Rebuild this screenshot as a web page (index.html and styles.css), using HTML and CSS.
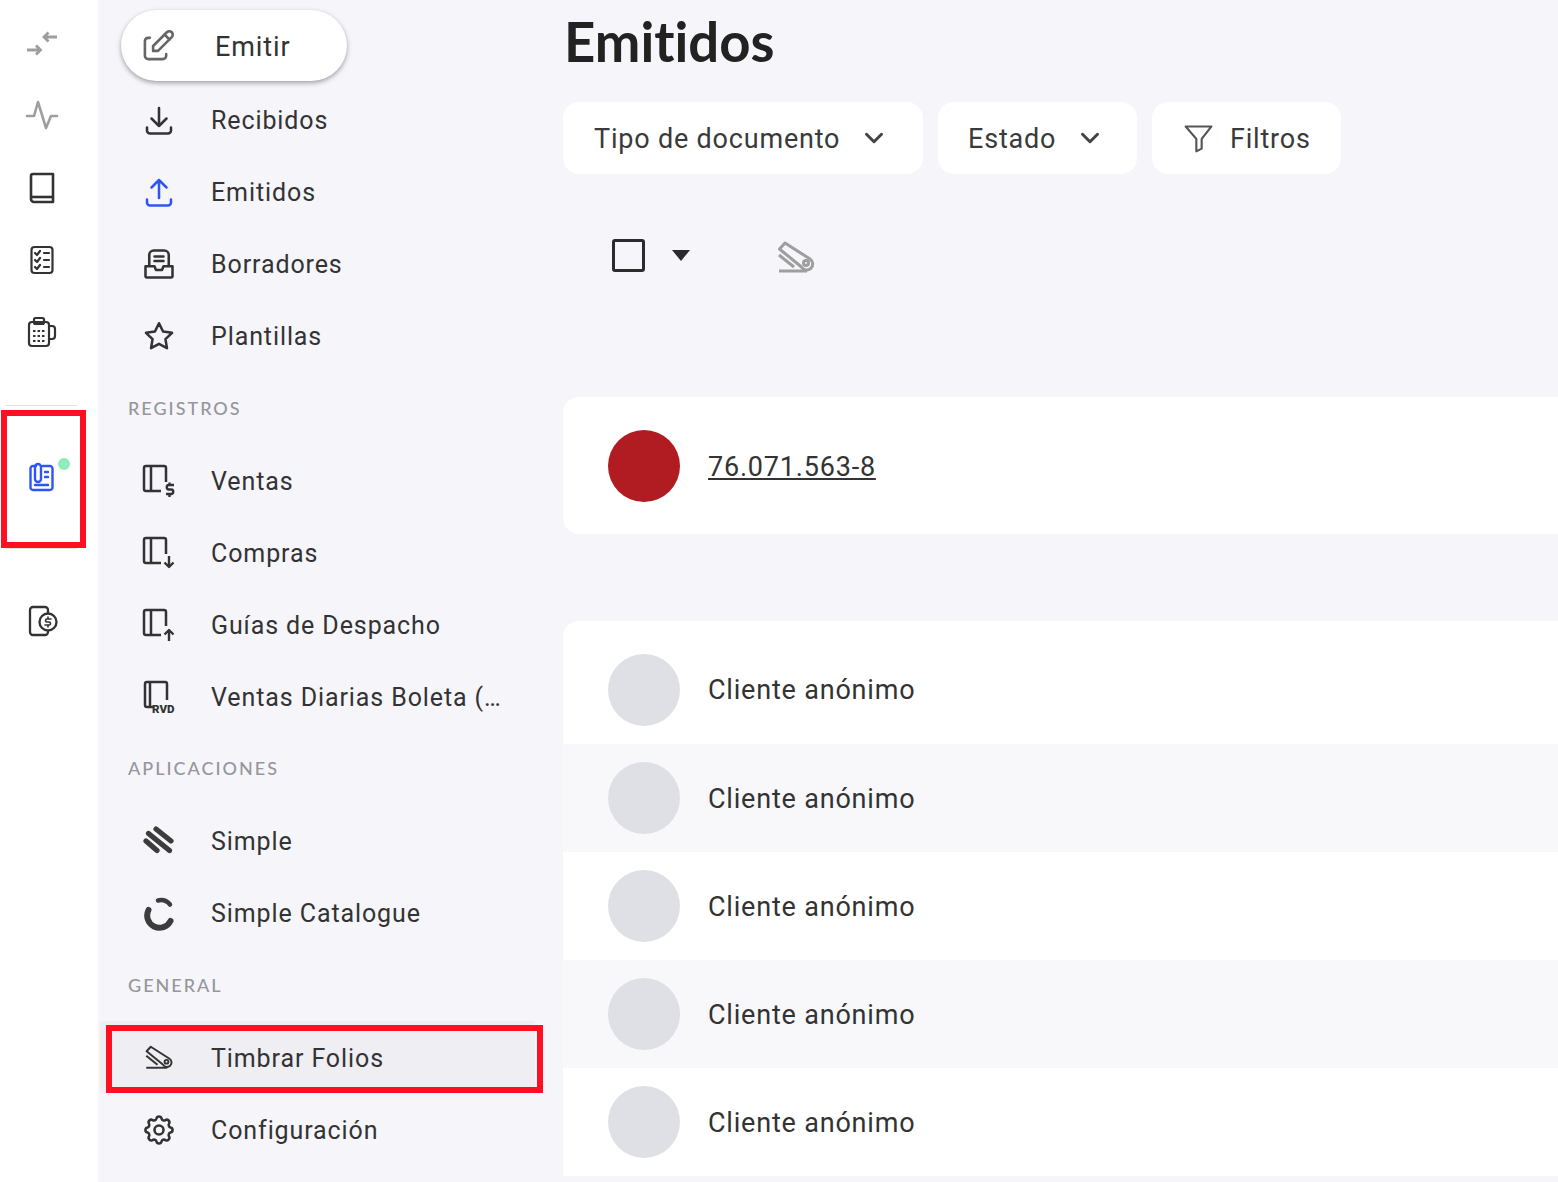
FILE: index.html
```html
<!DOCTYPE html>
<html lang="es">
<head>
<meta charset="utf-8">
<title>Emitidos</title>
<link rel="stylesheet" href="styles.css">
</head>
<body>
<div class="app">
  <nav class="rail">
    <div class="rail-top">
      <div class="rail-item"><svg class="ico" viewBox="0 0 36 36" fill="none" stroke="#9e9e9e" stroke-width="2.800"><path d="M3 25h13M12 20.500l4.500 4.500-4.500 4.500"/><path d="M33 12H20M24.500 7.500L20 12l4.500 4.500"/></svg></div>
      <div class="rail-item"><svg class="ico" viewBox="0 0 36 36" fill="none" stroke="#9e9e9e" stroke-width="2.600" stroke-linejoin="round" stroke-linecap="round"><path d="M3 19h7l4-14 8 26 5-12h6"/></svg></div>
      <div class="rail-item"><svg class="ico" viewBox="0 0 36 36" fill="none" stroke="#333" stroke-width="2.600" stroke-linejoin="round"><path d="M9 4h20v28H10a3 3 0 0 1-3-3V6a2 2 0 0 1 2-2z"/><path d="M7 27h22"/></svg></div>
      <div class="rail-item"><svg class="ico" viewBox="0 0 36 36" fill="none" stroke="#333" stroke-width="2.200" stroke-linecap="round" stroke-linejoin="round"><rect x="7.500" y="5" width="21" height="26" rx="3"/><path d="M11 11l2 2 3-4M11 18l2 2 3-4M11 25l2 2 3-4M20 11h5M20 18h5M20 25h5"/></svg></div>
      <div class="rail-item"><svg class="ico" viewBox="0 0 36 36" fill="none" stroke="#333" stroke-width="2.200" stroke-linejoin="round"><rect x="5" y="8" width="20" height="24" rx="3"/><rect x="10" y="4" width="10" height="6" rx="1.500"/><path d="M25 12h3a3 3 0 0 1 3 3v7a3 3 0 0 1-3 3h-3"/><path d="M9 17h12M9 22h12M9 27h12" stroke-dasharray="2.500 2"/></svg></div>
    </div>
    <div class="rail-group">
      <div class="rail-item"><svg class="ico" viewBox="0 0 36 36" fill="none" stroke="#2f55f5" stroke-width="2.400" stroke-linecap="round" stroke-linejoin="round"><path d="M12 7H9a2.500 2.500 0 0 0-2.500 2.500v19A2.500 2.500 0 0 0 9 31h17a2.500 2.500 0 0 0 2.500-2.500v-19A2.500 2.500 0 0 0 26 7h-7"/><path d="M11 20V8a3 3 0 0 1 6 0v12a3 3 0 0 1-6 0z"/><path d="M21 13h3M21 18h3M11 26h13"/></svg><span class="dot"></span></div>
      <span class="mark mark-rail"></span>
    </div>
    <div class="rail-item rail-last"><svg class="ico" viewBox="0 0 36 36" fill="none" stroke="#333" stroke-width="2.300" stroke-linecap="round" stroke-linejoin="round"><path d="M24 10V7a3 3 0 0 0-3-3H9a3 3 0 0 0-3 3v22a3 3 0 0 0 3 3h12a3 3 0 0 0 3-3"/><circle cx="24" cy="19" r="8.500"/><path d="M27 16h-4a1.500 1.500 0 0 0 0 3h2a1.500 1.500 0 0 1 0 3h-4M24 14v2M24 22v2" stroke-width="1.600"/></svg></div>
  </nav>

  <aside class="sidebar">
    <button class="emit"><svg class="ico" viewBox="1 1 22 22" fill="none" stroke="#666" stroke-width="1.600" stroke-linecap="round" stroke-linejoin="round"><path d="M7 7H6a2 2 0 0 0-2 2v9a2 2 0 0 0 2 2h9a2 2 0 0 0 2-2v-1"/><path d="M20.400 6.600a2.100 2.100 0 0 0-3-3L9 12v3h3l8.400-8.400z"/><path d="M16 5l3 3"/></svg><span class="emit-label">Emitir</span></button>
    <ul class="list">
      <li class="item"><svg class="ico" viewBox="0 0 24 24" fill="none" stroke="#333" stroke-width="1.700" stroke-linecap="round" stroke-linejoin="round"><path d="M4 17v2a2 2 0 0 0 2 2h12a2 2 0 0 0 2-2v-2M7 11l5 5 5-5M12 4v12"/></svg><span>Recibidos</span></li>
      <li class="item"><svg class="ico" viewBox="0 0 24 24" fill="none" stroke="#2f55f5" stroke-width="1.700" stroke-linecap="round" stroke-linejoin="round"><path d="M4 17v2a2 2 0 0 0 2 2h12a2 2 0 0 0 2-2v-2M7 9l5-5 5 5M12 4v12"/></svg><span>Emitidos</span></li>
      <li class="item"><svg class="ico" viewBox="0 0 24 24" fill="none" stroke="#333" stroke-width="1.700" stroke-linecap="round" stroke-linejoin="round"><path d="M5.500 13V6a3 3 0 0 1 3-3h7a3 3 0 0 1 3 3v7"/><path d="M9 7h6M9 10h6"/><path d="M3 13.500h6l1 2.500h4l1-2.500h6V20a1 1 0 0 1-1 1H4a1 1 0 0 1-1-1z"/></svg><span>Borradores</span></li>
      <li class="item"><svg class="ico" viewBox="0 0 24 24" fill="none" stroke="#333" stroke-width="1.700" stroke-linejoin="round"><path d="M12 3.500l2.700 5.500 6 .9-4.400 4.200 1 6L12 17.200 6.700 20.100l1-6L3.300 9.900l6-.9z"/></svg><span>Plantillas</span></li>
    </ul>
    <h2 class="section">REGISTROS</h2>
    <ul class="list">
      <li class="item"><svg class="ico" viewBox="0 0 36 36" fill="none" stroke="#333" stroke-width="2.500" stroke-linejoin="round"><path d="M25 19V5a2 2 0 0 0-2-2H5a2 2 0 0 0-2 2v21a2 2 0 0 0 2 2h15"/><path d="M10 3v25"/><path d="M33 22h-5a2 2 0 0 0 0 4.500h2a2 2 0 0 1 0 4.500h-5M28.500 19.500V22M28.500 31v3" stroke-width="2.400"/></svg><span>Ventas</span></li>
      <li class="item"><svg class="ico" viewBox="0 0 36 36" fill="none" stroke="#333" stroke-width="2.500" stroke-linejoin="round"><path d="M25 19V5a2 2 0 0 0-2-2H5a2 2 0 0 0-2 2v21a2 2 0 0 0 2 2h15"/><path d="M10 3v25"/><path d="M28 21v11M23.500 27.500L28 32l4.500-4.500" stroke-width="2.400"/></svg><span>Compras</span></li>
      <li class="item"><svg class="ico" viewBox="0 0 36 36" fill="none" stroke="#333" stroke-width="2.500" stroke-linejoin="round"><path d="M25 19V5a2 2 0 0 0-2-2H5a2 2 0 0 0-2 2v21a2 2 0 0 0 2 2h15"/><path d="M10 3v25"/><path d="M28 34V23M23.500 27.500L28 23l4.500 4.500" stroke-width="2.400"/></svg><span>Guías de Despacho</span></li>
      <li class="item"><span class="rvd"><svg class="ico" viewBox="0 0 36 36" fill="none" stroke="#333" stroke-width="2.500" stroke-linejoin="round"><path d="M26 21V5a2 2 0 0 0-2-2H6a2 2 0 0 0-2 2v21a2 2 0 0 0 2 2h6"/><path d="M9 3v25"/></svg><b class="rvd-label">RVD</b></span><span class="ellipsis">Ventas Diarias Boleta (Resumen Ventas)</span></li>
    </ul>
    <h2 class="section section-up">APLICACIONES</h2>
    <ul class="list">
      <li class="item"><svg class="ico" viewBox="0 0 36 36" fill="none" stroke="#3c3c3c" stroke-width="5.200" stroke-linecap="round"><path d="M15 6l15 12M7.500 10.500l21 17M5 18l11 9.500"/></svg><span>Simple</span></li>
      <li class="item"><svg class="ico" viewBox="0 0 36 36" fill="none" stroke="#3c3c3c" stroke-width="6" stroke-linecap="round"><path d="M7.500 15a12 12 0 0 0 22 11"/><path d="M17 5.500a12 12 0 0 1 12 4" stroke-width="4.500"/></svg><span>Simple Catalogue</span></li>
    </ul>
    <h2 class="section">GENERAL</h2>
    <ul class="list list-low">
      <li class="item item-active"><svg class="ico" viewBox="-5 -7 48 48" fill="none" stroke="#333" stroke-width="2.600" stroke-linejoin="round"><path d="M2 30h28"/><path d="M8 2l25 16a6 6 0 1 1-8.500 8L2.500 8z"/><circle cx="29" cy="22" r="2.500"/><path d="M2 14l15 12"/></svg><span>Timbrar Folios</span><span class="mark mark-item"></span></li>
      <li class="item"><svg class="ico" viewBox="0 0 24 24" fill="none" stroke="#333" stroke-width="1.700" stroke-linecap="round" stroke-linejoin="round"><path d="M10.300 4.300c.4-1.800 3-1.800 3.400 0a1.700 1.700 0 0 0 2.600 1.100c1.500-.9 3.300.8 2.400 2.400a1.700 1.700 0 0 0 1 2.500c1.800.4 1.800 3 0 3.400a1.700 1.700 0 0 0-1 2.600c.9 1.500-.9 3.300-2.400 2.400a1.700 1.700 0 0 0-2.600 1c-.4 1.800-3 1.800-3.400 0a1.700 1.700 0 0 0-2.600-1c-1.500.9-3.300-.9-2.400-2.400a1.700 1.700 0 0 0-1-2.600c-1.800-.4-1.800-3 0-3.400a1.700 1.700 0 0 0 1-2.500c-.9-1.600.9-3.300 2.400-2.400 1 .6 2.300.1 2.600-1.100z"/><circle cx="12" cy="12" r="3"/></svg><span>Configuración</span></li>
    </ul>
  </aside>

  <main class="main">
    <h1 class="title">Emitidos</h1>
    <div class="filters">
      <button class="filter filter-doc"><span>Tipo de documento</span><svg class="chev" viewBox="0 0 24 24" fill="none" stroke="#444" stroke-width="2.400" stroke-linecap="round" stroke-linejoin="round"><path d="M6 9l6 6 6-6"/></svg></button>
      <button class="filter filter-state"><span>Estado</span><svg class="chev" viewBox="0 0 24 24" fill="none" stroke="#444" stroke-width="2.400" stroke-linecap="round" stroke-linejoin="round"><path d="M6 9l6 6 6-6"/></svg></button>
      <button class="filter filter-more"><svg class="funnel" viewBox="0 0 36 36" fill="none" stroke="#555" stroke-width="2.400" stroke-linejoin="round"><path d="M3 5h29L21 19v11l-6 3V19z"/></svg><span>Filtros</span></button>
    </div>
    <div class="toolbar">
      <span class="check"></span>
      <span class="caret"></span>
      <svg class="stamp" viewBox="0 0 38 32" fill="none" stroke="#9e9e9e" stroke-width="3" stroke-linejoin="round"><path d="M2 30h28"/><path d="M8 2l25 16a6 6 0 1 1-8.500 8L2.500 8z"/><circle cx="29" cy="22" r="2.500"/><path d="M2 14l15 12"/></svg>
    </div>
    <section class="card card-head">
      <span class="avatar avatar-red"></span>
      <a class="rut" href="#">76.071.563-8</a>
    </section>
    <section class="card card-list">
      <div class="row row-first"><span class="avatar"></span><span class="name">Cliente anónimo</span></div>
      <div class="row row-alt"><span class="avatar"></span><span class="name">Cliente anónimo</span></div>
      <div class="row"><span class="avatar"></span><span class="name">Cliente anónimo</span></div>
      <div class="row row-alt"><span class="avatar"></span><span class="name">Cliente anónimo</span></div>
      <div class="row"><span class="avatar"></span><span class="name">Cliente anónimo</span></div>
    </section>
  </main>
</div>
</body>
</html>
```
FILE: styles.css
```css
* { box-sizing: border-box; }
html, body { margin: 0; height: 100%; overflow: hidden; }
body { font-family: Roboto, "Liberation Sans", sans-serif; color: #333; background: #f5f5fa; }
ul { list-style: none; margin: 0; padding: 0; }
button { font: inherit; color: inherit; border: 0; cursor: pointer; }

.app { display: flex; width: 1558px; height: 1182px; }

.ico { width: 36px; height: 36px; flex: none; display: block; }

.rail { width: 98px; flex: none; background: #fff; padding: 7px 16px 0 0; }
.rail-item { position: relative; height: 72px; display: flex; align-items: center; justify-content: center; padding-left: 2px; }
.rail-item:nth-child(3) { height: 73px; }
.rail-top { height: 398px; }
.rail-group { position: relative; margin: 0 5px; height: 144px; border-top: 1px solid #e3e3e3; border-bottom: 1px solid #e3e3e3; display: flex; align-items: center; justify-content: center; }
.rail-group .rail-item { width: 100%; }
.rail-last { margin-top: 35px; }
.dot { position: absolute; left: 53px; top: 17px; width: 12px; height: 12px; border-radius: 50%; background: #8eedb8; }

.mark { position: absolute; border: 6px solid #ff0f22; pointer-events: none; }
.mark-rail { left: -4px; top: 4px; width: 85px; height: 138px; }
.mark-item { left: 6px; top: 4px; width: 437px; height: 68px; }

.sidebar { width: 465px; flex: none; padding: 10px 28px 0 2px; font-size: 25px; letter-spacing: 0.9px; }
.emit { width: 226px; height: 71px; margin: 0 0 3px 21px; padding: 0 0 0 19px; display: flex; align-items: center; gap: 39px; background: #fff; border-radius: 36px; box-shadow: 0 2px 5px rgba(0, 0, 0, .35); font-size: 27px; letter-spacing: 0.9px; }
.emit-label { padding-top: 2px; }
.item { position: relative; height: 72px; display: flex; align-items: center; gap: 34px; padding: 0 30px 0 41px; }
.item-active { background: #eeeef3; }
.list-low .item { padding-top: 2px; }
.section { height: 72px; margin: 0 0 1px; padding-left: 28px; display: flex; align-items: center; font: 500 18px Lato, sans-serif; letter-spacing: 2px; color: #96969c; }
.section + .list + .section { margin-bottom: 0; }
.section-up { padding-bottom: 2px; }
.ellipsis { white-space: nowrap; overflow: hidden; text-overflow: ellipsis; min-width: 0; }
.rvd { position: relative; display: block; flex: none; }
.rvd-label { position: absolute; left: 11px; top: 23px; font: 900 11.500px Roboto, sans-serif; letter-spacing: 0; color: #333; }

.main { flex: 1; min-width: 0; }
.title { height: 102px; margin: 0; padding: 9px 0 0 1px; font: 700 54.500px/64px Lato, sans-serif; font-variant-ligatures: none; color: #222; }
.filters { display: flex; gap: 15px; }
.filter { height: 72px; display: flex; align-items: center; background: #fff; border-radius: 16px; font-size: 27px; letter-spacing: 0.8px; color: #3a3a3a; padding: 0; }
.filter span { padding-top: 2px; }
.filter-doc { width: 360px; padding-left: 31px; gap: 19px; }
.filter-state { width: 199px; padding-left: 30px; gap: 19px; }
.filter-more { width: 189px; padding-left: 31px; gap: 15px; }
.chev { width: 30px; height: 30px; flex: none; }
.funnel { width: 32px; height: 32px; flex: none; }
.toolbar { height: 223px; padding: 65px 0 0 49px; display: flex; align-items: flex-start; }
.check { width: 33px; height: 33px; border: 3px solid #2b2b2b; border-radius: 3px; }
.caret { width: 0; height: 0; margin: 11px 0 0 27px; border: 9px solid transparent; border-top: 11px solid #2b2b2b; border-bottom: 0; }
.stamp { width: 38px; height: 32px; margin: 2px 0 0 87px; }

.card { background: #fff; border-radius: 16px 0 0 16px; }
.card-head { height: 137px; margin-bottom: 87px; padding-left: 45px; display: flex; align-items: center; gap: 28px; font-size: 27px; letter-spacing: 0.8px; }
.rut { color: #333; padding-top: 2px; }
.avatar { width: 72px; height: 72px; border-radius: 50%; background: #dfe0e5; flex: none; }
.avatar-red { background: #b01c22; }
.card-list { border-radius: 16px 0 0 0; font-size: 27px; letter-spacing: 0.8px; }
.row { height: 108px; padding-left: 45px; display: flex; align-items: center; gap: 28px; }
.row-first { height: 123px; padding-top: 15px; }
.row-alt { background: #f8f8fb; }
.name { padding-top: 2px; }
.row-first .name { padding-top: 0; }
```
